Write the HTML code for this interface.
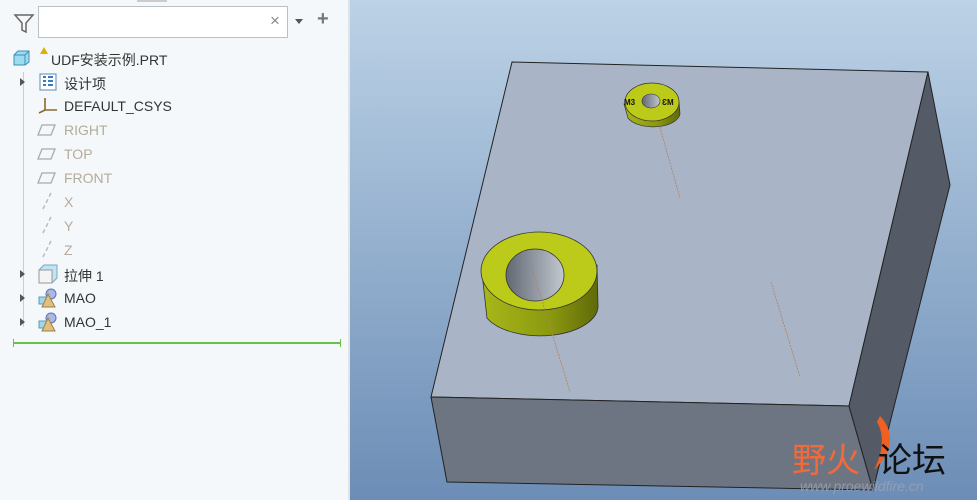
<!DOCTYPE html>
<html><head><meta charset="utf-8"><style>
body{margin:0;width:977px;height:500px;overflow:hidden;background:#f5f8fa;font-family:"Liberation Sans","Noto Sans CJK SC",sans-serif;position:relative}
.left{position:absolute;left:0;top:0;width:348px;height:500px;background:#f5f8fa}
.row{position:absolute;left:64px;font-size:14px;color:#333}
.g{color:#b5ab9c}
.arr{position:absolute;left:20px;width:0;height:0;border-top:4px solid transparent;border-bottom:4px solid transparent;border-left:5px solid #555}
</style></head><body>
<div class="left">
<div style="position:absolute;left:137px;top:0;width:30px;height:2px;background:#ccc"></div>
<svg style="position:absolute;left:13px;top:12px" width="22" height="22"><path d="M2 3 H20 L13 11 V20 L9 18 V11 Z" fill="none" stroke="#666" stroke-width="1.5"/></svg>
<div style="position:absolute;left:38px;top:6px;width:250px;height:32px;border:1px solid #b8c0c8;background:#fff;box-sizing:border-box"></div>
<div style="position:absolute;left:270px;top:11px;font-size:17px;color:#888">×</div>
<div style="position:absolute;left:295px;top:19px;border-left:4px solid transparent;border-right:4px solid transparent;border-top:5px solid #555"></div>
<div style="position:absolute;left:317px;top:8px;font-size:20px;font-weight:bold;color:#777">+</div>
<div style="position:absolute;left:23px;top:72px;width:1px;height:255px;background:#ccc"></div>
<svg style="position:absolute;left:13px;top:50px" width="18" height="16"><path d="M1 5 L5 1 H16 V12 L12 15 H1 Z" fill="#9ddcf0" stroke="#3a8fb8"/><path d="M1 5 H12 V15 M12 5 L16 1" fill="none" stroke="#3a8fb8"/></svg>
<div style="position:absolute;left:40px;top:47px;border-left:4px solid transparent;border-right:4px solid transparent;border-bottom:7px solid #e0b000"></div>
<div class="row" style="left:51px;top:50px">UDF安装示例.PRT</div>
<div class="arr" style="top:78px"></div>
<svg style="position:absolute;left:39px;top:73px" width="18" height="18"><rect x="1" y="1" width="16" height="16" fill="#fff" stroke="#5a8ab0"/><path d="M4 4h3M4 8h3M4 12h3M9 4h5M9 8h5M9 12h5" stroke="#3a7ac0" stroke-width="2"/></svg>
<div class="row" style="top:74px">设计项</div>
<svg style="position:absolute;left:37px;top:96px" width="22" height="18"><path d="M8 2 V14 H20 M8 14 L2 17" stroke="#8a6a30" stroke-width="1.6" fill="none"/></svg>
<div class="row" style="top:98px">DEFAULT_CSYS</div>
<svg style="position:absolute;left:37px;top:123px" width="20" height="14"><path d="M5 2H18L14 12H1Z" fill="none" stroke="#aaa" stroke-width="1.3"/></svg>
<div class="row g" style="top:122px">RIGHT</div>
<svg style="position:absolute;left:37px;top:147px" width="20" height="14"><path d="M5 2H18L14 12H1Z" fill="none" stroke="#aaa" stroke-width="1.3"/></svg>
<div class="row g" style="top:146px">TOP</div>
<svg style="position:absolute;left:37px;top:171px" width="20" height="14"><path d="M5 2H18L14 12H1Z" fill="none" stroke="#aaa" stroke-width="1.3"/></svg>
<div class="row g" style="top:170px">FRONT</div>
<svg style="position:absolute;left:40px;top:192px" width="14" height="66"><path d="M11 1L3 17M11 25L3 41M11 49L3 65" stroke="#bbb" stroke-width="1.5" stroke-dasharray="4 3"/></svg>
<div class="row g" style="top:194px">X</div>
<div class="row g" style="top:218px">Y</div>
<div class="row g" style="top:242px">Z</div>
<div class="arr" style="top:270px"></div>
<svg style="position:absolute;left:38px;top:264px" width="20" height="20"><path d="M1 6L6 1H19V14L14 19H1Z" fill="#bfe5f2" stroke="#7aa8c0"/><rect x="1" y="6" width="13" height="13" fill="#f4f4f4" stroke="#999"/></svg>
<div class="row" style="top:266px">拉伸 1</div>
<div class="arr" style="top:294px"></div>
<svg style="position:absolute;left:38px;top:288px" width="20" height="20"><circle cx="13" cy="6" r="5" fill="#a8b8e8" stroke="#6070b0"/><rect x="1" y="9" width="9" height="7" fill="#9fd8ec" stroke="#5a9ab8"/><path d="M10 6L4 19H17Z" fill="#e0c080" stroke="#a08040"/></svg>
<div class="row" style="top:290px">MAO</div>
<div class="arr" style="top:318px"></div>
<svg style="position:absolute;left:38px;top:312px" width="20" height="20"><circle cx="13" cy="6" r="5" fill="#a8b8e8" stroke="#6070b0"/><rect x="1" y="9" width="9" height="7" fill="#9fd8ec" stroke="#5a9ab8"/><path d="M10 6L4 19H17Z" fill="#e0c080" stroke="#a08040"/></svg>
<div class="row" style="top:314px">MAO_1</div>
<div style="position:absolute;left:14px;top:342px;width:327px;height:2px;background:#6cc04a"></div>
<div style="position:absolute;left:13px;top:339px;width:1px;height:8px;background:#6cc04a"></div>
<div style="position:absolute;left:340px;top:339px;width:1px;height:8px;background:#6cc04a"></div>
</div>
<div style="position:absolute;left:348px;top:0;width:2px;height:500px;background:#dfe4e8"></div>
<svg style="position:absolute;left:350px;top:0" width="627" height="500" viewBox="350 0 627 500">
<defs>
<linearGradient id="bg" x1="0" y1="0" x2="0" y2="1"><stop offset="0" stop-color="#bcd2e6"/><stop offset="1" stop-color="#6c8db6"/></linearGradient>
<linearGradient id="cy" x1="0" x2="1"><stop offset="0" stop-color="#a8b818"/><stop offset="0.6" stop-color="#8a9810"/><stop offset="1" stop-color="#5f6a08"/></linearGradient>
<linearGradient id="hole" x1="0" x2="1"><stop offset="0" stop-color="#626873"/><stop offset="1" stop-color="#c2c8d0"/></linearGradient>
</defs>
<rect x="350" y="0" width="627" height="500" fill="url(#bg)"/>
<polygon points="512,62 928,72 849,406 431,397" fill="#a9b5c6" stroke="#222" stroke-width="1"/>
<polygon points="431,397 849,406 873,490 447,482" fill="#6e7582" stroke="#222" stroke-width="1"/>
<polygon points="849,406 928,72 950,185 873,490" fill="#545b66" stroke="#222" stroke-width="1"/>
<line x1="655" y1="110" x2="680" y2="198" stroke="#b08060" stroke-width="0.8" stroke-dasharray="2 1"/>
<line x1="771" y1="282" x2="800" y2="377" stroke="#b08060" stroke-width="0.8" stroke-dasharray="2 1"/>
<path d="M482 273 L487 318 A58 30 0 0 0 598 305 L597 265 Z" fill="url(#cy)" stroke="#333" stroke-width="0.8"/>
<ellipse cx="539" cy="271" rx="58" ry="39" fill="#bccb1a" stroke="#333" stroke-width="0.8"/>
<ellipse cx="535" cy="275" rx="29" ry="26" fill="url(#hole)" stroke="#333" stroke-width="0.8"/>
<line x1="532" y1="268" x2="570" y2="392" stroke="#b08060" stroke-width="0.8" stroke-dasharray="2 1"/>
<path d="M624 104 L628 118 A27 14 0 0 0 680 114 L679 102 Z" fill="url(#cy)" stroke="#333" stroke-width="0.7"/>
<ellipse cx="652" cy="102" rx="27" ry="19" fill="#bcca1a" stroke="#333" stroke-width="0.7"/>
<ellipse cx="651" cy="101" rx="9" ry="7" fill="url(#hole)" stroke="#333" stroke-width="0.6"/>
<text x="624" y="105" font-size="8" font-weight="bold" fill="#111" font-family="Liberation Sans">M3</text>
<text x="662" y="105" font-size="8" font-weight="bold" fill="#111" font-family="Liberation Sans">ƐM</text>
<path d="M880 416 C895 432 893 452 874 470 C884 450 884 434 877 422 Z" fill="#f06020"/>
<text x="792" y="472" font-size="34" fill="#f26a3a" font-family="Noto Sans CJK SC">野火</text>
<text x="878" y="472" font-size="34" fill="#111" font-family="Noto Sans CJK SC">论坛</text>
<text x="800" y="491" font-size="14" font-style="italic" fill="#9aa4b4" font-family="Liberation Sans" opacity="0.8">www.proewildfire.cn</text>
</svg>
</body></html>
